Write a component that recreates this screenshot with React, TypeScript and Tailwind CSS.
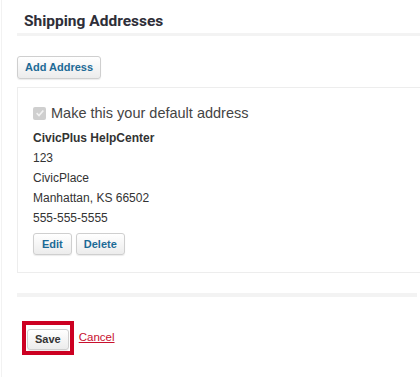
const lines = ["123", "CivicPlace", "Manhattan, KS 66502", "555-555-5555"];

const btn =
  "rounded-[3px] border border-[#cfcfcf] bg-gradient-to-b from-white to-[#ececec] shadow-[0_1px_1px_rgba(0,0,0,0.08)] font-bold text-[11px] leading-none";

export default function App() {
  return (
    <div
      className="h-[377px] w-[420px] overflow-hidden bg-white pl-[1px]"
      style={{ fontFamily: '"Liberation Sans", Arial, sans-serif' }}
    >
      <div className="h-full border-l border-[#f2f2f2] pl-[15px]">
        {/* Heading */}
        <h2
          className="pl-[7px] pt-[12px] text-[15.5px] font-bold leading-[19px] text-[#2e2e38]"
          style={{ fontFamily: 'Roboto, "Liberation Sans", sans-serif' }}
        >
          Shipping Addresses
        </h2>
        <div className="mt-[2px] h-[3px] bg-[#f3f3f3]" />

        <button className={`${btn} mt-[20px] h-[23px] px-[7px] text-[#1c6a96]`}>
          Add Address
        </button>

        {/* Address card */}
        <div className="mt-[8px] w-[430px] border border-[#ededed] pb-[17px] pl-[15px] pt-[17px]">
          <label className="flex items-center gap-[5px] text-[14.5px] leading-[16px] text-[#444]">
            <span className="flex h-[13px] w-[13px] items-center justify-center rounded-[2px] bg-[#cfcfcf]">
              <svg viewBox="0 0 12 12" className="h-[10px] w-[10px]">
                <path d="M2 6.2 L4.8 9 L10 3" fill="none" stroke="#f2f2f2" strokeWidth="2" />
              </svg>
            </span>
            Make this your default address
          </label>
          <div className="mt-[7px] text-[12px] font-bold leading-[20px] text-[#333]">
            CivicPlus HelpCenter
          </div>
          {lines.map((l) => (
            <div key={l} className="text-[12px] leading-[20px] text-[#333]">
              {l}
            </div>
          ))}
          <div className="mt-[5px] flex gap-[4px]">
            <button className={`${btn} h-[22px] px-[8px] text-[#1c6a96]`}>Edit</button>
            <button className={`${btn} h-[22px] px-[7px] text-[#1c6a96]`}>Delete</button>
          </div>
        </div>

        <div className="mt-[20px] mr-[3px] h-[4px] bg-[#f3f3f3]" />

        {/* Actions */}
        <div className="mt-[24px] flex items-center gap-[5px] pl-[5px]">
          <div className="border-[4px] border-[#cc0022] p-[1px]">
            <button className={`${btn} h-[21px] px-[7px] text-[#333]`}>Save</button>
          </div>
          <a href="#" className="text-[11.5px] text-[#c8102e] underline">
            Cancel
          </a>
        </div>
      </div>
    </div>
  );
}
